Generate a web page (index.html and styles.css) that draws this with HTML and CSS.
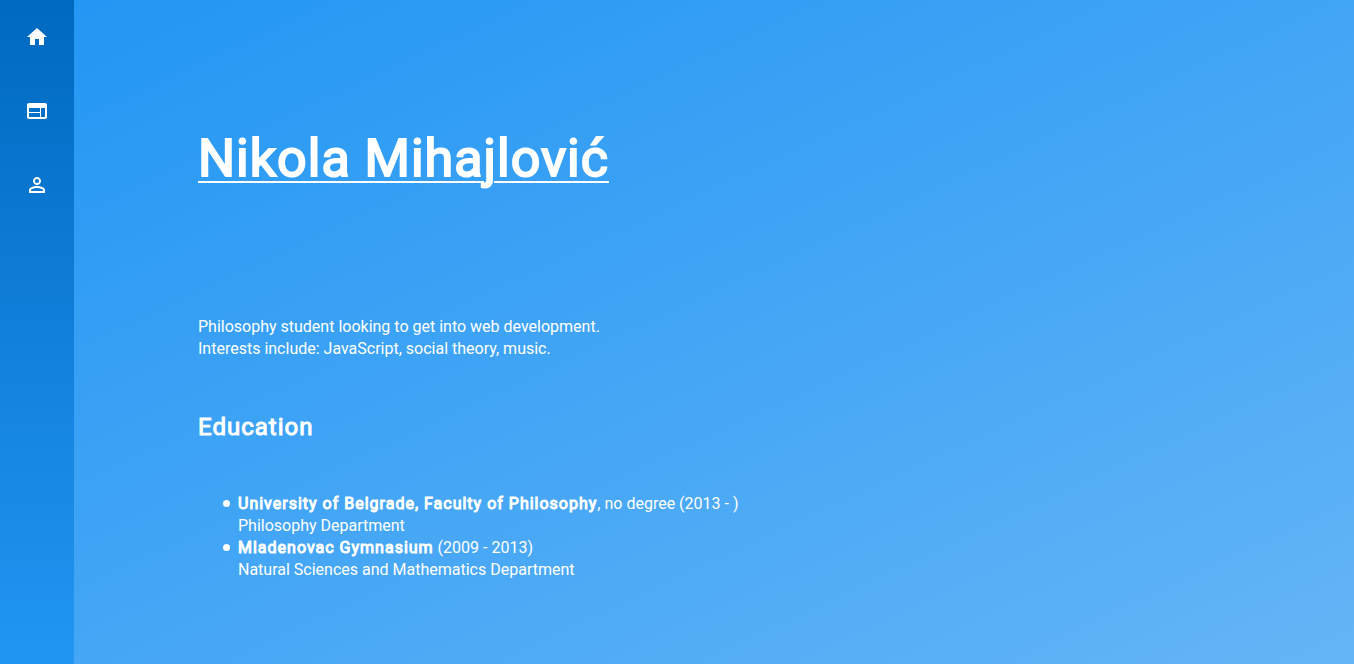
FILE: index.html
```html
<!DOCTYPE html>
<html lang="en">
<head>
<meta charset="utf-8">
<title>Nikola Mihajlović</title>
<link rel="stylesheet" href="styles.css">
</head>
<body>
<nav class="sidebar" aria-label="Main">
<a class="nav-link" href="#home" aria-label="Home"><svg viewBox="0 0 24 24"><path d="M10 20v-6h4v6h5v-8h3L12 3 2 12h3v8z"/></svg></a>
<a class="nav-link" href="#projects" aria-label="Projects"><svg viewBox="0 0 24 24"><path d="M20 4H4c-1.100 0-1.990.9-1.990 2L2 18c0 1.100.9 2 2 2h16c1.100 0 2-.9 2-2V6c0-1.100-.9-2-2-2zm-5 14H4v-4h11v4zm0-5H4V9h11v4zm5 5h-4V9h4v9z"/></svg></a>
<a class="nav-link" href="#about" aria-label="About"><svg viewBox="0 0 24 24"><path d="M12 5.900a2.100 2.100 0 1 1 0 4.200 2.100 2.100 0 0 1 0-4.200m0 9c2.970 0 6.100 1.460 6.100 2.100v1.100H5.900V17c0-.64 3.130-2.100 6.100-2.100M12 4C9.790 4 8 5.790 8 8s1.790 4 4 4 4-1.790 4-4-1.790-4-4-4zm0 9c-2.670 0-8 1.340-8 4v3h16v-3c0-2.660-5.330-4-8-4z"/></svg></a>
</nav>
<main class="content">
<h1 class="name">Nikola Mihajlović</h1>
<p class="intro">Philosophy student looking to get into web development.<br>Interests include: JavaScript, social theory, music.</p>
<h2 class="section-title">Education</h2>
<ul class="schools">
<li><strong>University of Belgrade, Faculty of Philosophy</strong>, no degree (2013 - )<br>Philosophy Department</li>
<li><strong>Mladenovac Gymnasium</strong> (2009 - 2013)<br>Natural Sciences and Mathematics Department</li>
</ul>
</main>
</body>
</html>
```
FILE: styles.css
```css
body {
  margin: 0;
  min-height: 100vh;
  display: flex;
  font: 400 16px/22px Roboto, sans-serif;
  color: #fff;
  background: linear-gradient(155deg, #2196f3, #42a5f5, #64b5f6);
}
.sidebar {
  width: 74px;
  flex: none;
  background: linear-gradient(#0069c0, #2196f3);
}
.nav-link {
  display: flex;
  align-items: center;
  justify-content: center;
  height: 74px;
}
.nav-link svg {
  width: 24px;
  height: 24px;
  fill: #fff;
}
.content {
  flex: 1;
  padding: 124px 124px 0;
}
.name {
  margin: 0;
  font-size: 52px;
  font-weight: 400;
  line-height: 70px;
  letter-spacing: 1px;
  text-decoration: underline;
  text-decoration-thickness: 2px;
  text-underline-offset: 5px;
  -webkit-text-stroke: 2px #fff;
}
.intro {
  margin: 122px 0 0;
}
.section-title {
  margin: 50px 0 0;
  font-size: 24px;
  font-weight: 400;
  line-height: 34px;
  letter-spacing: 1px;
  -webkit-text-stroke: 1px #fff;
}
.schools {
  margin: 49px 0 0;
  padding-left: 40px;
  list-style: none;
}
.schools li {
  position: relative;
}
.schools li::before {
  content: "";
  position: absolute;
  top: 7px;
  left: -15px;
  width: 7px;
  height: 7px;
  border-radius: 50%;
  background: #fff;
}
.schools strong {
  font-weight: 400;
  letter-spacing: 1px;
  -webkit-text-stroke: 1px #fff;
}
```
